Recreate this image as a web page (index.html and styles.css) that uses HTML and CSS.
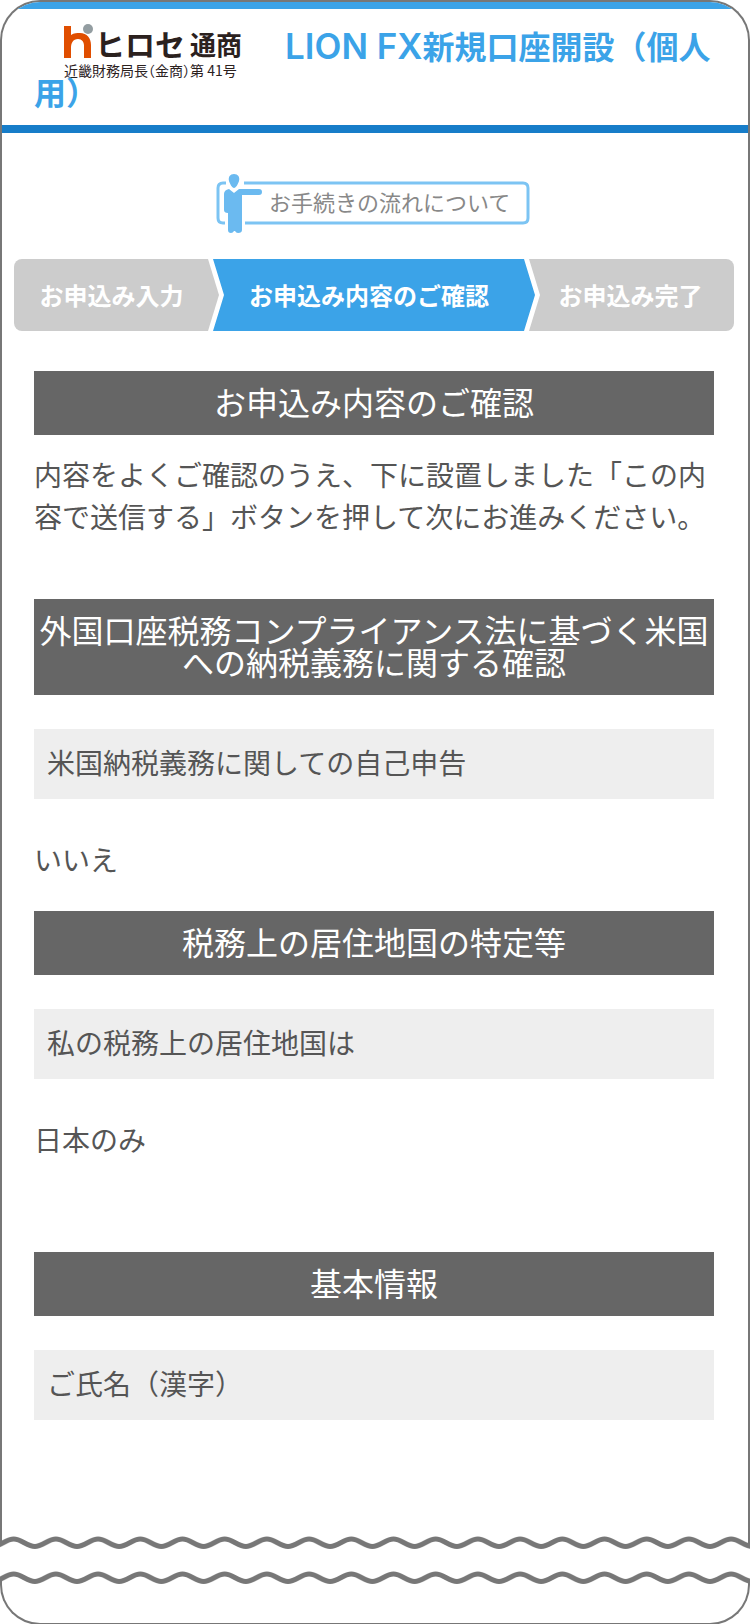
FILE: index.html
```html
<!DOCTYPE html>
<html lang="ja">
<head>
    <meta charset="UTF-8">
    <meta name="viewport" content="width=device-width, initial-scale=1.0">
    <title>LION FX新規口座開設（個人用）</title>
    <link rel="stylesheet" href="styles.css">
</head>
<body>
    <div class="screen">
        <header class="header">
            <h1><svg class="logo" width="178" height="46" viewBox="0 -2 178 46">
                <path fill="#e04e00" d="M0 2h7v9c3-2 6-2 9-2 7 0 11 5 11 12v13h-7V22c0-4-2-7-6-7-5 0-7 4-7 9v10H0z"/>
                <circle cx="24" cy="5" r="5" fill="#939da1"/>
                <text class="logo-kana" x="31" y="32">ヒロセ</text>
                <text class="logo-kanji" x="126" y="31">通商</text>
                <text class="logo-note" x="0" y="52">近畿財務局長（金商）第 41号</text>
            </svg><span class="latin">LION FX</span>新規口座開設（個人用）</h1>
        </header>

        <main>
            <a class="guide" href="#">
                <svg width="316" height="64" viewBox="0 0 316 64">
                    <g fill="none" stroke="#7cc4f3" stroke-width="3">
                        <path d="M28 11h279q5 0 5 5v30q0 5-5 5H29"/>
                        <path d="M10 11H7q-5 0-5 5v30q0 5 5 5h2"/>
                    </g>
                    <g fill="#6bbaf0">
                        <path d="M18 2c4 0 6 3 5 7-1 3-3 7-5 7s-4-4-5-7c-1-4 1-7 5-7z"/>
                        <path d="M13 17l5 4 5-4h20q3 0 3 3t-3 3H26v35q0 3-4 3-2 0-3-2h-1q-1 2-3 2-3 0-3-3V41q-4 0-4-3V22q0-4 5-5z"/>
                    </g>
                    <text class="guide-text" x="53" y="39">お手続きの流れについて</text>
                </svg>
            </a>

            <ol class="steps">
                <li class="step step-first">お申込み入力</li>
                <li class="step step-current" aria-current="step">お申込み内容のご確認</li>
                <li class="step step-last">お申込み完了</li>
            </ol>

            <section>
                <h2>お申込み内容のご確認</h2>
                <p class="lead">内容をよくご確認のうえ、下に設置しました「この内容で送信する」ボタンを押して次にお進みください。</p>
            </section>

            <section>
                <h2>外国口座税務コンプライアンス法に基づく米国への納税義務に関する確認</h2>
                <dl>
                    <dt>米国納税義務に関しての自己申告</dt>
                    <dd>いいえ</dd>
                </dl>
            </section>

            <section class="residence">
                <h2>税務上の居住地国の特定等</h2>
                <dl>
                    <dt>私の税務上の居住地国は</dt>
                    <dd>日本のみ</dd>
                </dl>
            </section>

            <section class="basic">
                <h2>基本情報</h2>
                <dl>
                    <dt>ご氏名（漢字）</dt>
                </dl>
            </section>
        </main>
    </div>

    <svg class="waves" viewBox="0 0 750 53" preserveAspectRatio="none">
        <defs>
            <pattern id="wave" x="-7.400" y="-1" width="42.200" height="35" patternUnits="userSpaceOnUse">
                <path d="M-21.100 5c7.700 0 13.400 7.500 21.100 7.500S13.400 5 21.100 5s13.400 7.500 21.100 7.500S55.600 5 63.300 5" fill="none" stroke="#777" stroke-width="5"/>
            </pattern>
        </defs>
        <rect width="750" height="53" fill="url(#wave)"/>
    </svg>
    <div class="screen-bottom"></div>
</body>
</html>
```
FILE: styles.css
```css
* {
    box-sizing: border-box;
}

body {
    margin: 0;
    background: #fff;
    color: #555;
    font-family: "Noto Sans CJK JP", sans-serif;
    font-size: 28px;
    line-height: 42px;
}

.screen {
    border: 2px solid #777;
    border-bottom: none;
    border-radius: 40px 40px 0 0;
    overflow: hidden;
}

/* header */
.header {
    border-top: 7px solid #3ba3e8;
    border-bottom: 8px solid #177dc9;
    padding: 13px 32px 11px;
}

h1 {
    margin: 0;
    color: #3ba3e8;
    font-size: 32px;
    font-weight: bold;
    line-height: 46px;
}

.latin {
    font-family: Inter, sans-serif;
    font-size: 35px;
    font-weight: 600;
    line-height: 1;
}

.logo {
    margin: 0 43px 0 30px;
    overflow: visible;
    vertical-align: top;
}

.logo text {
    fill: #2b211e;
}

.logo-kana {
    font-size: 30px;
    font-weight: bold;
}

.logo-kanji {
    font-size: 26px;
    font-weight: bold;
}

.logo-note {
    font-size: 14px;
    font-weight: normal;
    font-feature-settings: "halt";
}

main {
    padding-right: 2px;
}

/* link to the procedure guide */
.guide {
    display: block;
    width: 316px;
    margin: 39px auto 0;
}

.guide svg {
    display: block;
}

.guide-text {
    fill: #888;
    font-size: 22px;
}

/* progress steps */
.steps {
    display: grid;
    grid-template-columns: 199fr 316fr 205fr;
    list-style: none;
    margin: 23px 12px 40px;
    padding: 0;
    border-radius: 8px;
    overflow: hidden;
}

.step {
    background: #ccc;
    color: #fff;
    font-size: 24px;
    font-weight: bold;
    line-height: 72px;
    text-align: center;
    white-space: nowrap;
}

.step-first {
    margin-right: -6px;
    padding-right: 10px;
    clip-path: polygon(0 0, calc(100% - 11px) 0, 100% 50%, calc(100% - 11px) 100%, 0 100%);
}

.step-current {
    margin-right: -6px;
    padding-right: 10px;
    background: #3ba3e8;
    clip-path: polygon(0 0, calc(100% - 11px) 0, 100% 50%, calc(100% - 11px) 100%, 0 100%, 11px 50%);
}

.step-last {
    padding-right: 2px;
    clip-path: polygon(0 0, 100% 0, 100% 100%, 0 100%, 11px 50%);
}

/* sections */
section {
    margin: 0 32px;
}

h2 {
    margin: 0;
    padding: 14px 0 18px;
    background: #666;
    color: #fff;
    font-size: 32px;
    font-weight: normal;
    line-height: 32px;
    text-align: center;
}

.lead {
    margin: 0;
    padding: 18px 0 62px;
}

dl {
    margin: 0;
    padding-top: 34px;
}

dt {
    padding: 12px 13px 16px;
    background: #eee;
}

dd {
    margin: 0;
    padding: 39px 0 31px;
}

.residence {
    padding-bottom: 61px;
}

.basic {
    padding-bottom: 124px;
}

/* torn edge between the two parts of the screen */
.waves {
    display: block;
    position: relative;
    width: 100%;
    height: 53px;
    margin: -9px 0;
}

.screen-bottom {
    height: 46px;
    border: 2px solid #777;
    border-top: none;
    border-radius: 0 0 40px 40px;
}
```
